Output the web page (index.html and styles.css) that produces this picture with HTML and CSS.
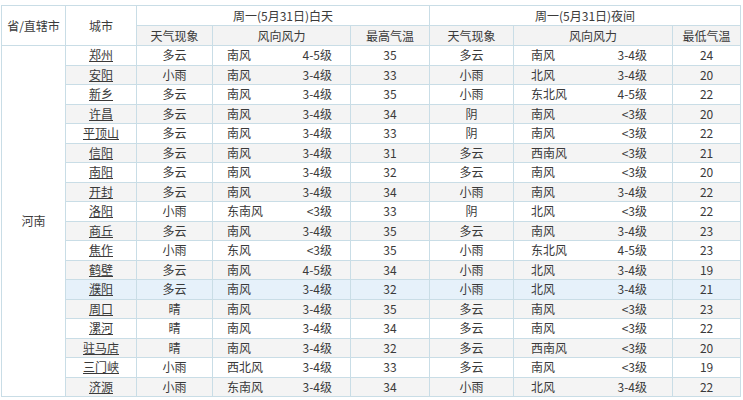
FILE: index.html
```html
<!DOCTYPE html>
<html lang="zh-CN">
<head>
<meta charset="utf-8">
<title>天气预报</title>
<link rel="stylesheet" href="styles.css">
</head>
<body>
<div class="wrap">
<table class="wx">
<colgroup>
<col class="c-prov"><col class="c-city"><col class="c-w1"><col class="c-wind1"><col class="c-hi"><col class="c-w2"><col class="c-wind2"><col class="c-lo">
</colgroup>
<thead>
<tr class="h1">
<th rowspan="2" class="white">省/直辖市</th>
<th rowspan="2" class="white">城市</th>
<th colspan="3">周一(5月31日)白天</th>
<th colspan="3">周一(5月31日)夜间</th>
</tr>
<tr class="h2">
<th>天气现象</th><th>风向风力</th><th>最高气温</th>
<th>天气现象</th><th>风向风力</th><th>最低气温</th>
</tr>
</thead>
<tbody>
<tr><td rowspan="18" class="prov">河南</td><td><a href="#">郑州</a></td><td>多云</td><td class="wind d"><span>南风</span><span>4-5级</span></td><td>35</td><td>多云</td><td class="wind n"><span>南风</span><span>3-4级</span></td><td>24</td></tr>
<tr class="alt"><td><a href="#">安阳</a></td><td>小雨</td><td class="wind d"><span>南风</span><span>3-4级</span></td><td>33</td><td>小雨</td><td class="wind n"><span>北风</span><span>3-4级</span></td><td>20</td></tr>
<tr><td><a href="#">新乡</a></td><td>多云</td><td class="wind d"><span>南风</span><span>3-4级</span></td><td>35</td><td>小雨</td><td class="wind n"><span>东北风</span><span>4-5级</span></td><td>22</td></tr>
<tr class="alt"><td><a href="#">许昌</a></td><td>多云</td><td class="wind d"><span>南风</span><span>3-4级</span></td><td>34</td><td>阴</td><td class="wind n"><span>南风</span><span>&lt;3级</span></td><td>20</td></tr>
<tr><td><a href="#">平顶山</a></td><td>多云</td><td class="wind d"><span>南风</span><span>3-4级</span></td><td>33</td><td>阴</td><td class="wind n"><span>南风</span><span>&lt;3级</span></td><td>22</td></tr>
<tr class="alt"><td><a href="#">信阳</a></td><td>多云</td><td class="wind d"><span>南风</span><span>3-4级</span></td><td>31</td><td>多云</td><td class="wind n"><span>西南风</span><span>&lt;3级</span></td><td>21</td></tr>
<tr><td><a href="#">南阳</a></td><td>多云</td><td class="wind d"><span>南风</span><span>3-4级</span></td><td>32</td><td>多云</td><td class="wind n"><span>南风</span><span>&lt;3级</span></td><td>20</td></tr>
<tr class="alt"><td><a href="#">开封</a></td><td>多云</td><td class="wind d"><span>南风</span><span>3-4级</span></td><td>34</td><td>小雨</td><td class="wind n"><span>南风</span><span>3-4级</span></td><td>22</td></tr>
<tr><td><a href="#">洛阳</a></td><td>小雨</td><td class="wind d"><span>东南风</span><span>&lt;3级</span></td><td>33</td><td>阴</td><td class="wind n"><span>北风</span><span>&lt;3级</span></td><td>22</td></tr>
<tr class="alt"><td><a href="#">商丘</a></td><td>多云</td><td class="wind d"><span>南风</span><span>3-4级</span></td><td>35</td><td>多云</td><td class="wind n"><span>南风</span><span>3-4级</span></td><td>23</td></tr>
<tr><td><a href="#">焦作</a></td><td>小雨</td><td class="wind d"><span>东风</span><span>&lt;3级</span></td><td>35</td><td>小雨</td><td class="wind n"><span>东北风</span><span>4-5级</span></td><td>23</td></tr>
<tr class="alt"><td><a href="#">鹤壁</a></td><td>多云</td><td class="wind d"><span>南风</span><span>4-5级</span></td><td>34</td><td>小雨</td><td class="wind n"><span>北风</span><span>3-4级</span></td><td>19</td></tr>
<tr class="hover"><td><a href="#">濮阳</a></td><td>多云</td><td class="wind d"><span>南风</span><span>3-4级</span></td><td>32</td><td>小雨</td><td class="wind n"><span>北风</span><span>3-4级</span></td><td>21</td></tr>
<tr class="alt"><td><a href="#">周口</a></td><td>晴</td><td class="wind d"><span>南风</span><span>3-4级</span></td><td>35</td><td>多云</td><td class="wind n"><span>南风</span><span>&lt;3级</span></td><td>23</td></tr>
<tr><td><a href="#">漯河</a></td><td>晴</td><td class="wind d"><span>南风</span><span>3-4级</span></td><td>34</td><td>多云</td><td class="wind n"><span>南风</span><span>&lt;3级</span></td><td>22</td></tr>
<tr class="alt"><td><a href="#">驻马店</a></td><td>晴</td><td class="wind d"><span>南风</span><span>3-4级</span></td><td>32</td><td>多云</td><td class="wind n"><span>西南风</span><span>&lt;3级</span></td><td>20</td></tr>
<tr><td><a href="#">三门峡</a></td><td>小雨</td><td class="wind d"><span>西北风</span><span>3-4级</span></td><td>33</td><td>多云</td><td class="wind n"><span>南风</span><span>&lt;3级</span></td><td>19</td></tr>
<tr class="alt"><td><a href="#">济源</a></td><td>小雨</td><td class="wind d"><span>东南风</span><span>3-4级</span></td><td>34</td><td>小雨</td><td class="wind n"><span>北风</span><span>3-4级</span></td><td>22</td></tr>
</tbody>
</table>
</div>
</body>
</html>
```

FILE: styles.css
```css
html, body {
  margin: 0;
  padding: 0;
  background: #ffffff;
}
body {
  font-family: "Noto Sans CJK SC", "Microsoft YaHei", sans-serif;
  font-size: 12px;
  color: #3a3a3a;
}
.wrap {
  padding: 5px 0 0 1px;
}
.wx {
  border-collapse: collapse;
  table-layout: fixed;
  width: 739px;
}
.c-prov { width: 64px; }
.c-city { width: 71px; }
.c-w1 { width: 76px; }
.c-wind1 { width: 138px; }
.c-hi { width: 79px; }
.c-w2 { width: 84px; }
.c-wind2 { width: 159px; }
.c-lo { width: 68px; }
.wx th, .wx td {
  border: 1px solid #c9dde6;
  padding: 0;
  text-align: center;
  vertical-align: middle;
  font-weight: normal;
  line-height: 16px;
  white-space: nowrap;
  overflow: hidden;
}
.wx thead tr { height: 20px; }
.wx .h2 th { background: #f3f3f3; }
.wx th.white { background: #ffffff; }
.wx tbody tr { height: 19.5px; }
.wx tbody tr.alt td { background: #f4f4f4; }
.wx tbody tr.hover td { background: #e6f1fa; }
.wx tbody td.prov { background: #ffffff; }
.wx a {
  color: #3a3a3a;
  text-decoration: underline;
}
.wind span:first-child { float: left; }
.wind span:last-child { float: right; }
.wind.d { padding: 0 18px 0 14px; }
.wind.n { padding: 0 25px 0 17px; }
```
